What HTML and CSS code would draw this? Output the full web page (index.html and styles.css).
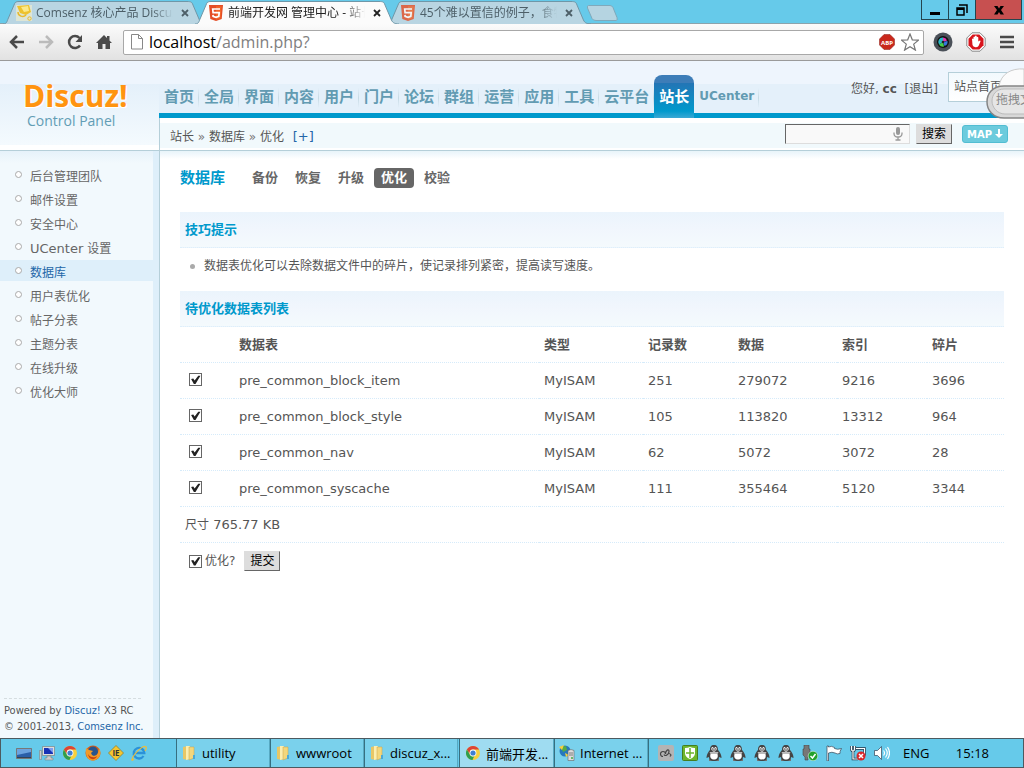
FILE: index.html
```html
<!DOCTYPE html>
<html lang="zh-CN">

<head>
    <meta charset="UTF-8">
    <meta name="viewport" content="width=device-width, initial-scale=1.0">
    <title>前端开发网 管理中心 - 站长</title>
    <link rel="stylesheet" href="styles.css">
</head>

<body>
    <svg class="sprite">
        <symbol id="tab-shape" viewBox="0 0 204 24">
            <path d="M0 24 C4 24 4 21 5 19 L11 5 C12 2 13 1.500 16 1.500 H184 C188 1.500 189 2 190 5 L196 19 C197 22 199 24 204 24" />
        </symbol>
        <symbol id="html5" viewBox="0 0 16 16">
            <path fill="#e44d26" d="M1 0h14l-1.300 14L8 16l-5.700-2z" />
            <path fill="#f16529" d="M8 1.200h5.700l-1.100 12L8 14.700z" />
            <path fill="none" stroke="#fff" stroke-width="1.700" d="M12 4H4.700l.4 3.700h6.100l-.4 3.700L8 12.300l-2.900-.9-.1-1.500" />
        </symbol>
        <symbol id="close" viewBox="0 0 8 8">
            <path d="M1 1l6 6M7 1L1 7" fill="none" stroke="currentColor" stroke-width="1.800" />
        </symbol>
        <symbol id="chrome" viewBox="0 0 16 16">
            <circle cx="8" cy="8" r="7" fill="#f8d03c" />
            <path fill="#dc4437" d="M1.900 4.500A7 7 0 0 1 14.100 4.600H8A3.400 3.400 0 0 0 4.800 9z" />
            <path fill="#2f9e4f" d="M1.900 4.500L5 9.700a3.400 3.400 0 0 0 4.300 1.400L7.500 15A7 7 0 0 1 1.900 4.500z" />
            <circle cx="8" cy="8" r="3.400" fill="#fff" />
            <circle cx="8" cy="8" r="2.600" fill="#3f7fd0" />
        </symbol>
        <symbol id="folder" viewBox="0 0 16 16">
            <path fill="#e8c766" d="M2 2l5-1v14l-5-1z" />
            <path fill="#fbeeb0" d="M5 1h4v13l-4 1z" />
            <path fill="#f3d77c" stroke="#c8a34a" stroke-width=".5" d="M8 2h5v11l-5 2z" />
            <path fill="#4aa9d8" d="M12 10h2v4h-2z" />
        </symbol>
        <symbol id="qq" viewBox="0 0 16 16">
            <path fill="#777" d="M3 14h10v2H3z" />
            <path fill="#444" d="M8 0c3 0 4 2 4 5 1 1 3.500 4 3.500 8L13 12c0 3-2 4-5 4s-5-1-5-4l-2.500 1C.5 9 3 6 4 5c0-3 1-5 4-5z" />
            <path fill="#fff" d="M4.500 9h7c1 4-1 5.500-3.500 5.500S3.500 13 4.500 9z" />
            <path fill="#bbb" d="M3.500 7h9l-1 2h-7z" />
            <ellipse cx="6.500" cy="3.700" rx="1.200" ry="1.600" fill="#fff" />
            <ellipse cx="9.500" cy="3.700" rx="1.200" ry="1.600" fill="#fff" />
            <path d="M6.500 3.500v1M9.500 3.500v1" stroke="#222" />
            <path fill="#ddd" d="M5.500 5.600h5L8 7z" />
        </symbol>
    </svg>

    <div class="tabstrip">
        <a class="tab" href="#">
            <svg class="tab-bg"><use href="#tab-shape" /></svg>
            <span class="tab-body">
                <svg class="icon" viewBox="0 0 16 16">
                    <path fill="#f5f0cf" d="M0 0h16v16H0z" opacity=".6" />
                    <path fill="#edc22e" d="M1 1l12-1 2 7-5 3-6-2z" />
                    <path fill="#fbe98a" d="M5 2l7-1 1 5-5 1z" />
                    <path d="M2 7c0 4 5 6 8 3" fill="none" stroke="#e8b92c" stroke-width="1.500" />
                    <circle cx="13.500" cy="13.500" r="1.700" fill="none" stroke="#e8b92c" />
                </svg>
                <span class="tab-title">Comsenz 核心产品 Discuz!</span>
                <svg class="tab-close"><use href="#close" /></svg>
            </span>
        </a>
        <a class="tab tab-current" href="#">
            <svg class="tab-bg"><use href="#tab-shape" /></svg>
            <span class="tab-body">
                <svg class="icon"><use href="#html5" /></svg>
                <span class="tab-title">前端开发网 管理中心 - 站长</span>
                <svg class="tab-close"><use href="#close" /></svg>
            </span>
        </a>
        <a class="tab" href="#">
            <svg class="tab-bg"><use href="#tab-shape" /></svg>
            <span class="tab-body">
                <svg class="icon faded"><use href="#html5" /></svg>
                <span class="tab-title">45个难以置信的例子，食物</span>
                <svg class="tab-close"><use href="#close" /></svg>
            </span>
        </a>
        <button class="newtab" aria-label="New tab">
            <svg viewBox="0 0 34 16">
                <path d="M3.500 .5H25q2 0 3 2l4 10q1 3-1 3H11q-3 0-4-2L2.500 3Q2 .5 3.500 .5z" fill="#b5d4e1" stroke="#7fa9bb" />
            </svg>
        </button>
        <div class="window-buttons">
            <button aria-label="Minimize"><svg viewBox="0 0 12 12"><path d="M1 8h10v3H1z" /></svg></button>
            <button aria-label="Restore"><svg viewBox="0 0 12 12"><path d="M1 4h7v7H1zM3 1h8v8" fill="none" stroke="#000" stroke-width="1.500" /><path d="M1 4h7v2H1z" /></svg></button>
            <button class="window-close" aria-label="Close"><svg viewBox="0 0 12 12"><path d="M1 2h3.500L6 4.500 7.500 2H11L8 6l3 4.500H7.500L6 8l-1.500 2.500H1L4 6z" /></svg></button>
        </div>
    </div>

    <div class="toolbar">
        <button class="tool" aria-label="Back"><svg viewBox="0 0 16 16"><path d="M15 8H2M8 2L2 8l6 6" /></svg></button>
        <button class="tool disabled" aria-label="Forward"><svg viewBox="0 0 16 16"><path d="M1 8h13M8 2l6 6-6 6" /></svg></button>
        <button class="tool" aria-label="Reload"><svg viewBox="0 0 16 16"><path d="M13 11.500A6 6 0 1 1 12.500 4" /><path class="solid" d="M15 1v7H8.500z" /></svg></button>
        <button class="tool" aria-label="Home"><svg viewBox="0 0 16 16"><path class="solid" d="M8 1L0 9h2v6h4.500v-5h3v5H14V9h2l-2.500-2.500V2H11v2z" /></svg></button>
        <div class="address">
            <svg class="page-icon" viewBox="0 0 12 16"><path d="M.5.5h7l4 4v10.500H.5zM7.500.5v4h4" fill="#fff" stroke="#888" /></svg>
            <span class="url">localhost<i>/admin.php?</i></span>
            <svg class="icon" viewBox="0 0 16 16">
                <path fill="#c9281c" stroke="#8d1a12" stroke-width=".5" d="M5 .5h6L15.500 5v6L11 15.500H5L.5 11V5z" />
                <text x="8" y="11" class="abp">ABP</text>
            </svg>
            <svg class="star" viewBox="0 0 18 18"><path d="M9 1l2.300 5.800 6.200.3-4.800 4 1.700 6L9 13.700l-5.400 3.400 1.700-6-4.800-4 6.200-.3z" fill="#fff" stroke="#777" stroke-width="1.200" /></svg>
        </div>
        <button class="ext" aria-label="Camera">
            <svg viewBox="0 0 20 20">
                <circle cx="10" cy="10" r="9.500" fill="#4a5058" />
                <circle cx="10" cy="10" r="6" fill="#111" />
                <path fill="#e33ab0" d="M10 10V5.500a4.500 4.500 0 0 1 4 3z" />
                <path fill="#3678dd" d="M10 10l4.500-1a4.500 4.500 0 0 1-3 5z" />
                <path fill="#45cf4a" d="M10 10l1 4.500a4.500 4.500 0 0 1-5-2z" />
                <path fill="#2bb8c8" d="M10 10l-4 2.500A4.500 4.500 0 0 1 10 5.500z" />
                <circle cx="10" cy="10" r="1.300" fill="#222" />
            </svg>
        </button>
        <button class="ext" aria-label="Ad blocker">
            <svg viewBox="0 0 20 20">
                <path fill="#fff" stroke="#888" d="M6 .8h8L19.200 6v8L14 19.200H6L.8 14V6z" />
                <path fill="#d8141c" d="M6.700 2.500h6.600l4.200 4.200v6.600l-4.200 4.200H6.700l-4.200-4.200V6.700z" />
                <path fill="#fff" d="M6 7q1-1.200 1.500 0V5q1-1 1.500 0V4q1-1 1.700 0v1.200q1-1 1.600.3v4l1.500-1q1 0 .7 1L12.500 14q-1 1.300-3 1.200Q7 15 6.500 13z" />
            </svg>
        </button>
        <button class="tool menu-button" aria-label="Menu"><svg viewBox="0 0 16 16"><path d="M1 3h14M1 8h14M1 13h14" /></svg></button>
    </div>

    <div class="page">
        <header class="header">
            <a class="logo" href="#">
                <span class="logo-name">Discuz!</span>
                <span class="logo-sub">Control Panel</span>
            </a>
            <div class="header-main">
                <div class="topbar">
                    <nav class="topnav">
                        <a href="#">首页</a>
                        <a href="#">全局</a>
                        <a href="#">界面</a>
                        <a href="#">内容</a>
                        <a href="#">用户</a>
                        <a href="#">门户</a>
                        <a href="#">论坛</a>
                        <a href="#">群组</a>
                        <a href="#">运营</a>
                        <a href="#">应用</a>
                        <a href="#">工具</a>
                        <a href="#">云平台</a>
                        <a class="active" href="#">站长</a>
                        <a class="en" href="#">UCenter</a>
                    </nav>
                    <div class="userinfo">
                        <span>您好, <b>cc</b> <a href="#"> [退出]</a></span>
                        <a class="homelink" href="#">站点首页</a>
                    </div>
                    <div class="cloud">
                        <svg viewBox="0 0 38 54">
                            <path d="M13 18C15 6 25 0 38 1V22H10z" fill="#fbfbfb" stroke="#ccc" />
                            <path d="M40 18H18C6 18 1 26 1 34s6 16 17 16h22z" fill="#d8d8d8" stroke="#858585" stroke-width="1.500" />
                            <path d="M40 21H18C10 21 6 27 6 33s5 13 13 13h21z" fill="#e6e6e6" stroke="#bbb" />
                        </svg>
                        <span>拖拽文</span>
                    </div>
                </div>
                <div class="crumbbar">
                    <div class="crumbs">站长 <i>»</i> 数据库 <i>»</i> 优化 <a class="en" href="#">[+]</a></div>
                    <form class="search">
                        <label class="searchbox">
                            <input type="text" aria-label="搜索">
                            <svg viewBox="0 0 10 14"><rect x="3" width="4" height="8" rx="2" fill="#999" /><path d="M1 5.500v1Q1 10 5 10t4-3.500v-1M5 10v3M2.500 13h5" fill="none" stroke="#999" stroke-width="1.300" /></svg>
                        </label>
                        <button type="button" class="btn">搜索</button>
                        <button type="button" class="map">MAP <svg viewBox="0 0 8 10"><path d="M3 0h2v5h3L4 9 0 5h3z" fill="#fff" /></svg></button>
                    </form>
                </div>
            </div>
        </header>

        <div class="body">
            <aside class="sidebar">
                <ul class="menu">
                    <li><a href="#">后台管理团队</a></li>
                    <li><a href="#">邮件设置</a></li>
                    <li><a href="#">安全中心</a></li>
                    <li><a href="#"><span class="en">UCenter</span> 设置</a></li>
                    <li class="active"><a href="#">数据库</a></li>
                    <li><a href="#">用户表优化</a></li>
                    <li><a href="#">帖子分表</a></li>
                    <li><a href="#">主题分表</a></li>
                    <li><a href="#">在线升级</a></li>
                    <li><a href="#">优化大师</a></li>
                </ul>
                <div class="copyright">
                    <p>Powered by <a href="#">Discuz!</a> X3 RC</p>
                    <p>© 2001-2013, <a href="#">Comsenz Inc.</a></p>
                </div>
            </aside>

            <main class="content">
                <div class="subnav">
                    <h3>数据库</h3>
                    <a href="#">备份</a>
                    <a href="#">恢复</a>
                    <a href="#">升级</a>
                    <a class="active" href="#">优化</a>
                    <a href="#">校验</a>
                </div>

                <h4 class="section">技巧提示</h4>
                <ul class="tips">
                    <li>数据表优化可以去除数据文件中的碎片，使记录排列紧密，提高读写速度。</li>
                </ul>

                <h4 class="section">待优化数据表列表</h4>
                <table class="tb">
                    <colgroup>
                        <col class="c-check">
                        <col>
                        <col class="c-wide">
                        <col class="c-num">
                        <col class="c-wide">
                        <col class="c-num">
                        <col class="c-last">
                    </colgroup>
                    <thead>
                        <tr>
                            <th></th>
                            <th>数据表</th>
                            <th>类型</th>
                            <th>记录数</th>
                            <th>数据</th>
                            <th>索引</th>
                            <th>碎片</th>
                        </tr>
                    </thead>
                    <tbody>
                        <tr>
                            <td><input type="checkbox" aria-label="pre_common_block_item" checked></td>
                            <td>pre_common_block_item</td>
                            <td>MyISAM</td>
                            <td>251</td>
                            <td>279072</td>
                            <td>9216</td>
                            <td>3696</td>
                        </tr>
                        <tr>
                            <td><input type="checkbox" aria-label="pre_common_block_style" checked></td>
                            <td>pre_common_block_style</td>
                            <td>MyISAM</td>
                            <td>105</td>
                            <td>113820</td>
                            <td>13312</td>
                            <td>964</td>
                        </tr>
                        <tr>
                            <td><input type="checkbox" aria-label="pre_common_nav" checked></td>
                            <td>pre_common_nav</td>
                            <td>MyISAM</td>
                            <td>62</td>
                            <td>5072</td>
                            <td>3072</td>
                            <td>28</td>
                        </tr>
                        <tr>
                            <td><input type="checkbox" aria-label="pre_common_syscache" checked></td>
                            <td>pre_common_syscache</td>
                            <td>MyISAM</td>
                            <td>111</td>
                            <td>355464</td>
                            <td>5120</td>
                            <td>3344</td>
                        </tr>
                        <tr>
                            <td colspan="7"><span class="cn">尺寸</span> 765.77 KB</td>
                        </tr>
                    </tbody>
                </table>
                <div class="submit">
                    <input type="checkbox" id="chkall" checked>
                    <label for="chkall">优化?</label>
                    <button type="button" class="btn">提交</button>
                </div>
            </main>
        </div>
    </div>

    <footer class="taskbar">
        <div class="quick">
            <svg class="icon" viewBox="0 0 16 16"><path fill="#2a5fa8" stroke="#777" d="M.5 3.500h15v10H.5z" /><path fill="#6ba3df" d="M1 4h14v3L1 10z" /><path fill="#345" d="M1 12h14v1H1z" /></svg>
            <svg class="icon" viewBox="0 0 16 16"><path fill="#ddd" stroke="#777" stroke-width=".6" d="M3.500 1.500h12v9h-12z" /><path fill="#1732b5" d="M5 3h9v6H5z" /><path fill="#7f9ff0" d="M9 3h5v5z" /><path fill="#ccc" stroke="#777" stroke-width=".5" d="M8 11h4v2h2v2H6v-2h2zM.5 5.500h2v9h-2z" /></svg>
            <svg class="icon"><use href="#chrome" /></svg>
            <svg class="icon" viewBox="0 0 16 16"><circle cx="8" cy="8" r="7.500" fill="#d85b16" /><circle cx="8" cy="6.500" r="5" fill="#28548c" /><path fill="#f29a28" d="M1 3l3 2 4 1-2 2 1 2c3 2 5 0 6-2l1-5c3 5 1 11-5 12.500C3 16 0 11 1 3z" /><path fill="#c9420f" d="M3 9c2 4 7 4 9 2-1 4-8 5-9-2z" /></svg>
            <svg class="icon" viewBox="0 0 16 16"><path fill="#f5c630" stroke="#8c7420" stroke-width=".7" d="M8 .5L15.500 8 8 15.500.5 8z" /><text class="ie-text" x="8" y="11">IE</text></svg>
            <svg class="icon" viewBox="0 0 16 16"><path d="M12.500 11A5.300 5.300 0 1 1 13.300 8H4.500" fill="none" stroke="#2b92d8" stroke-width="2.300" /><path d="M3 14c-3 3-3 0 1-5s9-9 11-7c1 1 0 2-1 4" fill="none" stroke="#f0bc38" stroke-width="1.200" /></svg>
        </div>
        <div class="tasks">
            <button><svg class="icon"><use href="#folder" /></svg><span>utility</span></button>
            <button><svg class="icon"><use href="#folder" /></svg><span>wwwroot</span></button>
            <button><svg class="icon"><use href="#folder" /></svg><span>discuz_x...</span></button>
            <button class="current"><svg class="icon"><use href="#chrome" /></svg><span>前端开发...</span></button>
            <button><svg class="icon" viewBox="0 0 16 16"><circle cx="6" cy="6" r="5.500" fill="#2678bd" /><path fill="#54ad48" d="M2 2l5-1 1 4-4 2z" /><path fill="#f5cf3d" d="M0 2l5-2-2 5zM6 8l4 2-3 2z" /><path fill="#ddd" stroke="#666" stroke-width=".6" d="M9 5.500l3-1 3 1v10H9z" /><path d="M10 8h4M10 10h4" stroke="#666" stroke-width=".8" /><circle cx="13" cy="13" r="1" fill="#4a4" /></svg><span>Internet ...</span></button>
        </div>
        <div class="tray">
            <svg class="icon" viewBox="0 0 16 16"><rect width="16" height="16" rx="2" fill="#b4b4b4" /><path d="M5 11.500a2.500 2.500 0 1 1 2.500-2.500C7.500 5 11 3.500 11 6.500S7 12 6 9.500M9 10q2-3 4 0l-1 1.500" fill="none" stroke="#444" stroke-width="1.200" /></svg>
            <svg class="icon" viewBox="0 0 16 16"><rect x=".5" y=".5" width="15" height="15" rx="1" fill="#6db52d" stroke="#447f20" /><path fill="#fff" d="M3 3q3 0 5-1 2 1 5 1v5q0 4-5 6-5-2-5-6z" /><path d="M8 3v10M4 8h8" stroke="#6db52d" stroke-width="1.500" /></svg>
            <svg class="icon"><use href="#qq" /></svg>
            <svg class="icon"><use href="#qq" /></svg>
            <svg class="icon"><use href="#qq" /></svg>
            <svg class="icon"><use href="#qq" /></svg>
            <svg class="icon" viewBox="0 0 16 16"><path fill="#777" stroke="#444" stroke-width=".6" d="M2 0h5v4h1v6L6 12v3H3v-3L1 10V4h1z" /><circle cx="11" cy="11" r="4.800" fill="#21a12c" stroke="#fff" stroke-width=".5" /><path d="M8.500 11l2 2 3-4" fill="none" stroke="#fff" stroke-width="1.500" /></svg>
            <svg class="icon" viewBox="0 0 16 16"><path fill="#fff" stroke="#345" stroke-width=".7" d="M1 1h1.500v1q3-1.500 6 .5v1q3 1.500 7 0-2 3-1.500 5-3 1-5-.5-3-1.500-6.500 0V16H1z" /></svg>
            <svg class="icon" viewBox="0 0 16 16"><path d="M6 3.500h8.500v7M1.500 1v3q0 2 1.500 2t1.500-2V1M3 6v8h5" fill="none" stroke="#234" stroke-width="2.600" /><path d="M6 3.500h8.500v7M1.500 1v3q0 2 1.500 2t1.500-2V1M3 6v8h5" fill="none" stroke="#fff" stroke-width="1.200" /><circle cx="11" cy="11" r="4.500" fill="#d8282c" /><path d="M9 9l4 4M13 9l-4 4" stroke="#fff" stroke-width="1.500" /></svg>
            <svg class="icon" viewBox="0 0 16 16"><path fill="#fff" stroke="#345" stroke-width=".7" d="M.5 5.500h3l4-4v13l-4-4h-3z" /><path d="M9.500 5.500q2 2.500 0 5M11.500 3.500q3.500 4.500 0 9M13.500 2q4 6 0 12" fill="none" stroke="#fff" stroke-width="1.200" /></svg>
            <span class="lang">ENG</span>
            <span class="clock">15:18</span>
        </div>
    </footer>
</body>

</html>
```

FILE: styles.css
```css
* {
    box-sizing: border-box;
}

body {
    margin: 0;
    min-height: 100vh;
    display: flex;
    flex-direction: column;
    overflow-x: hidden;
    font-family: 'DejaVu Sans', 'Noto Sans CJK SC', sans-serif;
    font-size: 12px;
    line-height: 20px;
    color: #555;
    background: #fff;
}

a {
    color: inherit;
    text-decoration: none;
}

i {
    font-style: normal;
}

ul,
p,
h3,
h4 {
    margin: 0;
    padding: 0;
    list-style: none;
}

button {
    font-family: inherit;
    padding: 0;
    border: 0;
    background: none;
}

svg {
    flex: none;
}

.sprite {
    display: none;
}

.en {
    font-size: 13px;
}

.cn {
    font-size: 12px;
}

.icon {
    width: 16px;
    height: 16px;
}

/* browser window */
.tabstrip {
    display: flex;
    height: 24px;
    padding-left: 3px;
    background: #66caea;
    border-bottom: 1px solid #8ba3ac;
    font-family: 'Open Sans', 'Noto Sans CJK SC', sans-serif;
}

.tab {
    display: grid;
    width: 204px;
    height: 24px;
    margin-right: -12px;
    color: #4d5f68;
    z-index: 1;
}

.tab-bg,
.tab-body {
    grid-area: 1 / 1;
}

.tab-bg {
    width: 204px;
    height: 24px;
    fill: #b9d5e2;
    stroke: #6f97a8;
}

.tab-current {
    color: #222;
    z-index: 2;
}

.tab-current .tab-bg {
    fill: #fbfbfb;
}

.tab-body {
    display: flex;
    align-items: center;
    gap: 4px;
    width: 204px;
    padding: 2px 18px 0 13px;
}

.tab-title {
    flex: 1;
    min-width: 0;
    overflow: hidden;
    white-space: nowrap;
    font-size: 12px;
    margin-right: 4px;
    mask-image: linear-gradient(to left, transparent, #000 20px);
}

.tab-close {
    width: 8px;
    height: 8px;
}

.faded {
    opacity: .8;
}

.newtab {
    width: 34px;
    height: 16px;
    margin: 5px 0 0 6px;
}

.newtab svg {
    display: block;
}

.window-buttons {
    display: flex;
    height: 20px;
    margin-left: auto;
    margin-right: 2px;
    border: 1px solid #24454f;
    border-top: 0;
}

.window-buttons button {
    display: flex;
    align-items: center;
    justify-content: center;
    width: 27px;
    border-right: 1px solid #24454f;
}

.window-buttons svg {
    width: 12px;
    height: 12px;
}

.window-buttons .window-close {
    width: 45px;
    border: 0;
    background: #c75050;
}

.toolbar {
    display: flex;
    align-items: center;
    height: 37px;
    padding: 0 9px;
    gap: 13px;
    background: linear-gradient(#fbfbfb, #e2e2e2);
    border-bottom: 1px solid #9a9a9a;
}

.tool svg {
    display: block;
    width: 16px;
    height: 16px;
    fill: none;
    stroke: #4a4a4a;
    stroke-width: 2.500;
}

.tool .solid {
    fill: #4a4a4a;
    stroke: none;
}

.disabled svg {
    stroke: #bbb;
}

.address {
    flex: 1;
    display: flex;
    align-items: center;
    gap: 6px;
    height: 25px;
    margin-left: -2px;
    margin-right: -4px;
    padding: 0 4px 0 7px;
    background: #fff;
    border: 1px solid #a8a8a8;
    border-radius: 2px;
}

.page-icon {
    width: 12px;
    height: 16px;
}

.url {
    flex: 1;
    font-family: 'Open Sans', sans-serif;
    font-size: 16px;
    color: #000;
}

.url i {
    color: #808080;
}

.abp,
.ie-text {
    font: bold 6px 'Open Sans', sans-serif;
    fill: #fff;
    text-anchor: middle;
}

.ie-text {
    font-size: 8px;
    fill: #333;
}

.star {
    width: 18px;
    height: 18px;
}

.ext svg {
    display: block;
    width: 20px;
    height: 20px;
}

/* admin page */
.page {
    flex: 1;
    display: flex;
    flex-direction: column;
}

.header {
    display: flex;
    border-bottom: 1px solid #b5cfd9;
    background: linear-gradient(#eef5fd 23px, #e4f0fa 23px, #f4fafe 84px, #fff 84px);
}

.logo {
    display: flex;
    flex-direction: column;
    width: 159px;
    padding: 20px 0 0 23px;
    font-family: 'Open Sans', sans-serif;
    white-space: nowrap;
}

.logo-name {
    font-size: 30px;
    line-height: 30px;
    font-weight: bold;
    color: #ff9410;
    text-shadow: 1px 1px #fff, -1px 1px #fff;
}

.logo-sub {
    padding-left: 4px;
    font-size: 14px;
    color: #629db5;
}

.header-main {
    flex: 1;
    min-width: 0;
}

.topbar {
    position: relative;
    display: flex;
    justify-content: space-between;
    height: 57px;
    background: linear-gradient(#eef5fd 23px, #e4f0fa 23px);
    border-bottom: 5px solid #09c;
}

.topnav {
    display: flex;
    align-items: flex-end;
    white-space: nowrap;
}

.topnav a {
    height: 43px;
    margin-bottom: -5px;
    padding: 0 5px;
    line-height: 45px;
    font-size: 15px;
    font-weight: bold;
    color: #629bb2;
    background: linear-gradient(transparent, #c6dbe5, transparent) right 13px / 1px 20px no-repeat;
}

.topnav a.en {
    font-size: 12px;
    line-height: 43px;
}

.topnav a.active {
    color: #fff;
    background: linear-gradient(#3d7db8 8px, #2375b5 8px, #09c 36px, #3aa8d4);
    border-radius: 8px 8px 0 0;
}

.userinfo {
    display: flex;
    align-items: flex-start;
    gap: 10px;
    margin-right: 16px;
    padding-top: 11px;
    white-space: nowrap;
}

.userinfo span {
    padding-top: 7px;
}

.userinfo span a {
    padding-left: 4px;
}

.homelink {
    padding: 5px;
    line-height: 18px;
    background: linear-gradient(#f2f9fd, #fff);
    border: 1px solid #b5cfd9;
}

.cloud {
    position: absolute;
    top: 7px;
    right: 0;
    width: 38px;
    height: 54px;
    overflow: hidden;
}

.cloud svg {
    display: block;
}

.cloud span {
    position: absolute;
    top: 22px;
    left: 10px;
    white-space: nowrap;
    color: #888;
}

.crumbbar {
    display: flex;
    justify-content: space-between;
    align-items: center;
    height: 32px;
    padding: 0 16px 0 10px;
    border-left: 1px solid #b5cfd9;
    background: linear-gradient(#fff 5px, #f1f9fc 5px, #f1f9fc 30px, #fff 30px);
}

.crumbs {
    padding-top: 5px;
}

.crumbs i {
    color: #777;
}

.crumbs a {
    margin-left: 5px;
    color: #2366a8;
}

.search {
    display: flex;
    align-items: center;
}

.searchbox {
    display: flex;
    align-items: center;
    width: 125px;
    height: 20px;
    padding-right: 6px;
    margin-right: 6px;
    background: #f9f9f9;
    border: 1px solid;
    border-color: #666 #ddd #ddd #666;
}

.searchbox input {
    flex: 1;
    min-width: 0;
    border: 0;
    outline: 0;
    background: none;
}

.searchbox svg {
    width: 10px;
    height: 14px;
}

.btn {
    height: 20px;
    padding: 0 5px;
    font-size: 12px;
    line-height: 18px;
    color: #000;
    background: #ddd;
    border: 1px solid;
    border-color: #ddd #666 #666 #ddd;
}

.map {
    display: flex;
    align-items: center;
    gap: 3px;
    height: 18px;
    margin-left: 10px;
    padding: 0 4px;
    font-size: 10px;
    font-weight: bold;
    color: #fff;
    background: #6ccbdd;
    border: 1px solid #52bdd2;
    border-radius: 3px;
}

.map svg {
    width: 8px;
    height: 10px;
}

.body {
    flex: 1;
    display: flex;
}

.sidebar {
    width: 160px;
    display: flex;
    flex-direction: column;
    justify-content: space-between;
    background: linear-gradient(#e6f2fa, #f2f9fd 12px);
    border-right: 1px solid #b5cfd9;
    box-shadow: inset -6px 0 #deeffa;
}

.menu {
    padding-top: 13px;
}

.menu li {
    margin-bottom: 3px;
    padding-left: 15px;
    color: #666;
}

.menu .active {
    color: #2366a8;
    background: #deeffa;
}

.menu a {
    display: flex;
    align-items: center;
    gap: 4px;
    height: 21px;
    padding-top: 4px;
}

.menu a::before {
    content: '';
    box-sizing: border-box;
    width: 7px;
    height: 7px;
    margin: 0 4px 4px 0;
    border: 1px solid #aaa;
    border-radius: 50%;
    background: #fff;
}

.copyright {
    margin: 0 18px 3px 4px;
    padding-top: 4px;
    border-top: 1px dashed #d5dde0;
    font-family: 'DejaVu Sans Condensed', 'DejaVu Sans', sans-serif;
    font-size: 11px;
    line-height: 16px;
    white-space: nowrap;
}

.copyright a {
    color: #2366a8;
}

.content {
    flex: 1;
    padding: 17px 20px;
    background: linear-gradient(#e8f4fa, #fff 8px);
}

.subnav {
    display: flex;
    align-items: center;
    gap: 3px;
    margin-bottom: 24px;
}

.subnav h3 {
    margin-right: 17px;
    font-size: 15px;
    color: #09c;
}

.subnav a {
    padding: 0 7px;
    font-size: 13px;
    font-weight: bold;
    color: #666;
}

.subnav .active {
    color: #fff;
    background: #666;
    border-radius: 4px;
}

.section {
    padding: 8px 5px 7px;
    font-size: 13px;
    line-height: 20px;
    color: #09c;
    background: linear-gradient(#ebf4fc, #f1f6fd, #f4fafd);
    border-bottom: 1px dotted #deeffb;
}

.tips {
    padding: 8px 10px 15px;
}

.tips li {
    display: flex;
    align-items: center;
}

.tips li::before {
    content: '';
    width: 5px;
    height: 5px;
    margin-right: 9px;
    border-radius: 50%;
    background: #aaa;
}

.tb {
    width: 100%;
    table-layout: fixed;
    border-collapse: collapse;
}

.tb th,
.tb td {
    padding: 8px 5px 7px;
    text-align: left;
    font-size: 13px;
    line-height: 20px;
    border-bottom: 1px dotted #d6ebfa;
}

.c-check {
    width: 54px;
}

.c-wide {
    width: 104px;
}

.c-num {
    width: 90px;
}

.c-last {
    width: 77px;
}

input[type="checkbox"] {
    appearance: none;
    display: inline-block;
    width: 13px;
    height: 13px;
    margin: 0 0 0 4px;
    border: 1px solid #666;
    background: #fff;
    vertical-align: -1px;
}

input[type="checkbox"]:checked::before {
    content: '';
    display: block;
    width: 11px;
    height: 11px;
    background: #222;
    clip-path: polygon(10% 45%, 30% 40%, 42% 60%, 75% 15%, 95% 15%, 50% 90%, 35% 90%);
}

.submit {
    display: flex;
    align-items: center;
    padding: 8px 5px;
}

.submit label {
    margin: 0 9px 0 3px;
}

/* windows taskbar */
.taskbar {
    display: flex;
    height: 30px;
    background: #66caea;
    border: 1px solid #4c5a60;
    font-family: 'Open Sans', 'Noto Sans CJK SC', sans-serif;
    color: #000;
}

.quick {
    display: flex;
    align-items: center;
    gap: 7px;
    width: 175px;
    padding-left: 15px;
}

.tasks {
    display: flex;
}

.tasks button {
    display: flex;
    align-items: center;
    gap: 5px;
    width: 94px;
    padding-left: 4px;
    font-size: 13px;
    white-space: nowrap;
    color: #000;
    background: #7ad1ec;
    border-left: 1px solid #376f80;
    border-right: 1px solid #57a9c2;
}

.tasks .current {
    width: 95px;
    margin-left: 1px;
    padding-left: 5px;
    background: #9fdcf1;
}

.tray {
    flex: 1;
    display: flex;
    align-items: center;
    gap: 8px;
    padding-left: 9px;
    border-left: 1px solid #376f80;
    font-size: 13px;
}

.lang {
    margin-left: 5px;
}

.clock {
    margin-left: auto;
    margin-right: 34px;
}
```
